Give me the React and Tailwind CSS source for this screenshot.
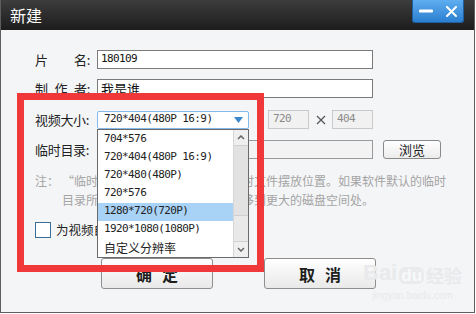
const mono = "font-['DejaVu_Sans_Mono','Noto_Sans_CJK_SC',monospace] text-[11px] tracking-[-0.6px]";

const sizes = [
  "704*576",
  "720*404(480P 16:9)",
  "720*480(480P)",
  "720*576",
  "1280*720(720P)",
  "1920*1080(1080P)",
];

const Label = ({ parts }) => (
  <div className="w-[62px] shrink-0">
    <div className="w-[55px] flex justify-between whitespace-nowrap text-[13px] tracking-[-0.3px] text-[#222] leading-none">
      {parts.map((p) => (
        <span key={p}>{p}</span>
      ))}
    </div>
  </div>
);

const TitleBar = () => (
  <div className="h-[30px] shrink-0 flex justify-between items-start bg-gradient-to-b from-[#3d3d3d] to-[#1d1d1d] pl-[9px] pr-[10px]">
    <span className="text-white text-[16px] leading-[30px]">新建</span>
    <div className="h-[23px] w-[52px] flex items-center justify-around rounded-b-[3px] bg-gradient-to-b from-[#5eaef0] to-[#2b7fd0] border border-t-0 border-[#1f5f9f]">
      <svg width="14" height="4" viewBox="0 0 14 4">
        <rect x="0" y="0.5" width="14" height="3" rx="1" fill="#fff" />
      </svg>
      <svg width="11" height="11" viewBox="0 0 11 11">
        <path d="M1 1L10 10M10 1L1 10" stroke="#fff" strokeWidth="2" strokeLinecap="round" />
      </svg>
    </div>
  </div>
);

const Dropdown = () => (
  <div className="absolute left-0 top-[18px] z-10 w-[152px] h-[129px] flex border border-[#6a6a6a] bg-white">
    <div className="flex-1 pt-[1px]">
      {sizes.map((s) => (
        <div
          key={s}
          className={`h-[18px] flex items-center pl-[6px] ${mono} text-[#222] ${s === "1280*720(720P)" ? "bg-[#a9d2f7]" : ""}`}
        >
          {s}
        </div>
      ))}
      <div className="h-[18px] flex items-center pl-[6px] text-[12px] text-[#222]">自定义分辨率</div>
    </div>
    <div className="w-[15px] flex flex-col bg-[#e9e9e9] border-l border-[#d6d6d6]">
      <div className="h-[16px] flex items-center justify-center border-b border-[#d0d0d0] bg-[#efefef]">
        <svg width="8" height="5" viewBox="0 0 8 5">
          <path d="M1 4L4 1L7 4" stroke="#666" strokeWidth="1.5" fill="none" />
        </svg>
      </div>
      <div className="h-[70px] bg-[#e2e2e2] border-b border-[#cfcfcf]"></div>
      <div className="flex-1"></div>
      <div className="h-[16px] flex items-center justify-center border-t border-[#d0d0d0] bg-[#efefef]">
        <svg width="8" height="5" viewBox="0 0 8 5">
          <path d="M1 1L4 4L7 1" stroke="#666" strokeWidth="1.5" fill="none" />
        </svg>
      </div>
    </div>
  </div>
);

const BigButton = ({ a, b }) => (
  <button className="w-[112px] h-[31px] flex items-center justify-center gap-[10px] rounded-[3px] border border-[#8e8e8e] bg-gradient-to-b from-white to-[#e9e9e9] text-[16px] font-bold text-[#1e1e1e]">
    <span>{a}</span>
    <span>{b}</span>
  </button>
);

export default function App() {
  return (
    <div className="w-[476px] h-[314px] bg-white font-['Noto_Sans_CJK_SC',sans-serif]">
      <div className="relative w-[475px] h-[313px] flex flex-col border-x border-b border-[#5e5e5e] bg-[#f4f5f7] overflow-hidden">
        <TitleBar />
        <div className="flex flex-col pl-[34px]">
          <div className="mt-[20px] h-[19px] flex items-center">
            <Label parts={["片", "名:"]} />
            <div className={`w-[276px] h-[19px] flex items-center px-[3px] border border-[#7b7b7b] bg-white text-[#111] ${mono}`}>
              180109
            </div>
          </div>
          <div className="mt-[10px] h-[19px] flex items-center">
            <Label parts={["制", "作", "者:"]} />
            <div className="w-[276px] h-[19px] flex items-center px-[3px] border border-[#7b7b7b] bg-white text-[13px] text-[#111]">
              我是谁
            </div>
          </div>
          <div className="mt-[12px] h-[19px] flex items-center">
            <Label parts={["视频大小:"]} />
            <div className="relative w-[152px] h-[18px]">
              <div className={`h-full flex items-center justify-between pl-[6px] pr-[5px] border border-[#86b9ea] rounded-[2px] bg-white text-[#222] ${mono}`}>
                <span>720*404(480P 16:9)</span>
                <svg width="9" height="6" viewBox="0 0 9 6">
                  <path d="M0 0H9L4.5 6Z" fill="#3b86cc" />
                </svg>
              </div>
              <Dropdown />
            </div>
            <div className={`ml-[19px] w-[41px] h-[19px] flex items-center px-[4px] border border-[#c9c9c9] bg-[#f1f1f1] text-[#8a8a8a] ${mono}`}>
              720
            </div>
            <div className="w-[23px] flex justify-center">
              <svg width="10" height="10" viewBox="0 0 10 10">
                <path d="M1 1L9 9M9 1L1 9" stroke="#555" strokeWidth="1.2" />
              </svg>
            </div>
            <div className={`w-[41px] h-[19px] flex items-center px-[4px] border border-[#c9c9c9] bg-[#f1f1f1] text-[#8a8a8a] ${mono}`}>
              404
            </div>
          </div>
          <div className="mt-[11px] h-[19px] flex items-center">
            <Label parts={["临时目录:"]} />
            <div className="w-[276px] h-[19px] border border-[#9a9a9a] bg-[#f3f3f3]"></div>
            <button className="ml-[10px] w-[58px] h-[19px] flex items-center justify-center rounded-[3px] border border-[#8a8a8a] bg-gradient-to-b from-white to-[#ececec] text-[13px] text-[#222]">
              浏览
            </button>
          </div>
          <div className="mt-[12px] flex text-[12px] leading-[19px] text-[#a4a4a4]">
            <span className="w-[27px] shrink-0">注：</span>
            <div className="whitespace-nowrap">
              <div>“临时目录”是视频转换过程中临时文件摆放位置。如果软件默认的临时</div>
              <div>目录所在的磁盘空间不足，建议您移到更大的磁盘空间处。</div>
            </div>
          </div>
          <div className="mt-[13px] h-[16px] flex items-center">
            <div className="w-[16px] h-[16px] border border-[#3b6d9c] bg-white"></div>
            <span className="ml-[5px] text-[12.5px] text-[#222] whitespace-nowrap">为视频自动生成封面图片</span>
          </div>
          <div className="mt-[20px] ml-[66px] flex gap-[51px]">
            <BigButton a="确" b="定" />
            <BigButton a="取" b="消" />
          </div>
        </div>

        <div className="absolute left-[16px] top-[93px] z-20 w-[247px] h-[179px] border-[7px] border-[#f0383a]"></div>

        <div className="absolute left-[362px] top-[262px] flex flex-col items-center text-[#e8eaec] select-none">
          <div className="flex items-end gap-[2px] font-['Liberation_Sans',sans-serif] font-bold text-[22px] leading-none">
            <span>Bai</span>
            <span className="rounded-[6px] bg-[#e9ebed] text-[#f8f9fa] px-[2px] text-[17px]">du</span>
            <span className="text-[18px] font-['Noto_Sans_CJK_SC',sans-serif]">经验</span>
          </div>
          <span className="mt-[4px] text-[10px] font-['Liberation_Sans',sans-serif] text-[#e8eaec]">jingyan.baidu.com</span>
        </div>
      </div>
    </div>
  );
}
